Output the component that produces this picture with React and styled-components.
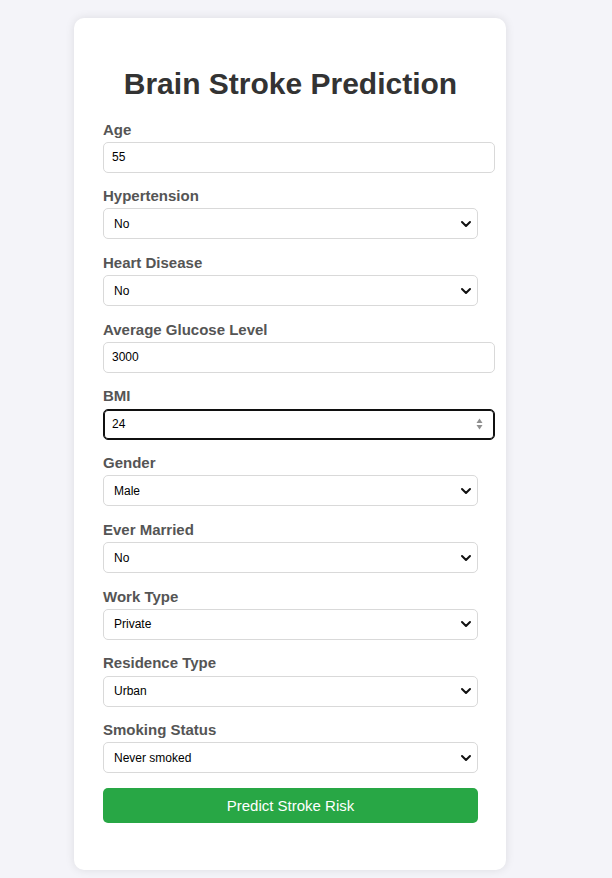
import React from "react";
import styled, { createGlobalStyle } from "styled-components";

const Global = createGlobalStyle`
  html, body { margin: 0; padding: 0; }
  body {
    background: #f4f4f9;
    font-family: "Liberation Sans", Arial, sans-serif;
  }
`;

const Page = styled.div`
  padding: 18px 0 8px 74px;
`;

const Card = styled.div`
  width: 375px;
  background: #fff;
  border-radius: 10px;
  box-shadow: 0 0 10px rgba(0, 0, 0, 0.1);
  padding: 29px 28px 47px 29px;
`;

const Title = styled.h1`
  margin: 20px 0 19.5px;
  font-size: 30px;
  line-height: 34px;
  font-weight: 700;
  color: #333;
  text-align: center;
`;

const Field = styled.div`
  margin-bottom: 14.55px;
`;

const Label = styled.label`
  display: block;
  font-size: 15px;
  line-height: 17px;
  font-weight: 700;
  color: #555;
  margin-bottom: 4.2px;
`;

const InputWrap = styled.div`
  position: relative;
  width: 392px;
`;

const TextInput = styled.input`
  display: block;
  box-sizing: border-box;
  width: 100%;
  height: 31px;
  padding: 0 8px;
  font-family: "Liberation Sans", Arial, sans-serif;
  font-size: 12px;
  color: #000;
  background: #fff;
  border: 1px solid ${(p) => (p.$focused ? "#101010" : "#d9d9d9")};
  box-shadow: ${(p) => (p.$focused ? "inset 0 0 0 1px #101010" : "none")};
  border-radius: 5px;
  outline: none;
  -moz-appearance: textfield;
  &::-webkit-inner-spin-button,
  &::-webkit-outer-spin-button {
    -webkit-appearance: none;
    margin: 0;
  }
`;

const Spinner = styled.svg`
  position: absolute;
  right: 12px;
  top: 9.5px;
  pointer-events: none;
`;

const SelectWrap = styled.div`
  position: relative;
  width: 100%;
`;

const Select = styled.select`
  display: block;
  box-sizing: border-box;
  width: 100%;
  height: 31px;
  padding: 0 24px 0 10px;
  font-family: "Liberation Sans", Arial, sans-serif;
  font-size: 12px;
  color: #000;
  background: #fff;
  border: 1px solid #d9d9d9;
  border-radius: 5px;
  appearance: none;
  -webkit-appearance: none;
  outline: none;
`;

const Chevron = styled.svg`
  position: absolute;
  right: 6px;
  top: 11.5px;
  pointer-events: none;
`;

const Button = styled.button`
  display: block;
  width: 100%;
  height: 35px;
  margin-top: 0;
  border: none;
  border-radius: 5px;
  background: #28a745;
  color: #fff;
  font-family: "Liberation Sans", Arial, sans-serif;
  font-size: 15px;
  cursor: pointer;
`;

function ChevronIcon() {
  return (
    <Chevron width="12" height="8" viewBox="0 0 12 8">
      <path d="M2 2 L6 6 L10 2" fill="none" stroke="#111" strokeWidth="2" strokeLinecap="round" strokeLinejoin="round" />
    </Chevron>
  );
}

function InputField({ label, value, focused, type = "text" }) {
  return (
    <Field>
      <Label>{label}</Label>
      <InputWrap>
        <TextInput type={type} defaultValue={value} $focused={focused} />
        {focused && (
          <Spinner width="7" height="12" viewBox="0 0 7 12">
            <path d="M3.5 0.5 L6.5 5 L0.5 5 Z" fill="#8f8f8f" />
            <path d="M3.5 11.5 L6.5 7 L0.5 7 Z" fill="#8f8f8f" />
          </Spinner>
        )}
      </InputWrap>
    </Field>
  );
}

function SelectField({ label, value, options }) {
  return (
    <Field>
      <Label>{label}</Label>
      <SelectWrap>
        <Select defaultValue={value}>
          {options.map((o) => (
            <option key={o} value={o}>
              {o}
            </option>
          ))}
        </Select>
        <ChevronIcon />
      </SelectWrap>
    </Field>
  );
}

export default function App() {
  return (
    <Page>
      <Global />
      <Card>
        <Title>Brain Stroke Prediction</Title>
        <form onSubmit={(e) => e.preventDefault()}>
          <InputField label="Age" value="55" />
          <SelectField label="Hypertension" value="No" options={["No", "Yes"]} />
          <SelectField label="Heart Disease" value="No" options={["No", "Yes"]} />
          <InputField label="Average Glucose Level" value="3000" />
          <InputField label="BMI" value="24" type="number" focused />
          <SelectField label="Gender" value="Male" options={["Male", "Female", "Other"]} />
          <SelectField label="Ever Married" value="No" options={["No", "Yes"]} />
          <SelectField
            label="Work Type"
            value="Private"
            options={["Private", "Self-employed", "Govt_job", "Children", "Never_worked"]}
          />
          <SelectField label="Residence Type" value="Urban" options={["Urban", "Rural"]} />
          <SelectField
            label="Smoking Status"
            value="Never smoked"
            options={["Never smoked", "Formerly smoked", "Smokes", "Unknown"]}
          />
          <Button type="submit">Predict Stroke Risk</Button>
        </form>
      </Card>
    </Page>
  );
}
